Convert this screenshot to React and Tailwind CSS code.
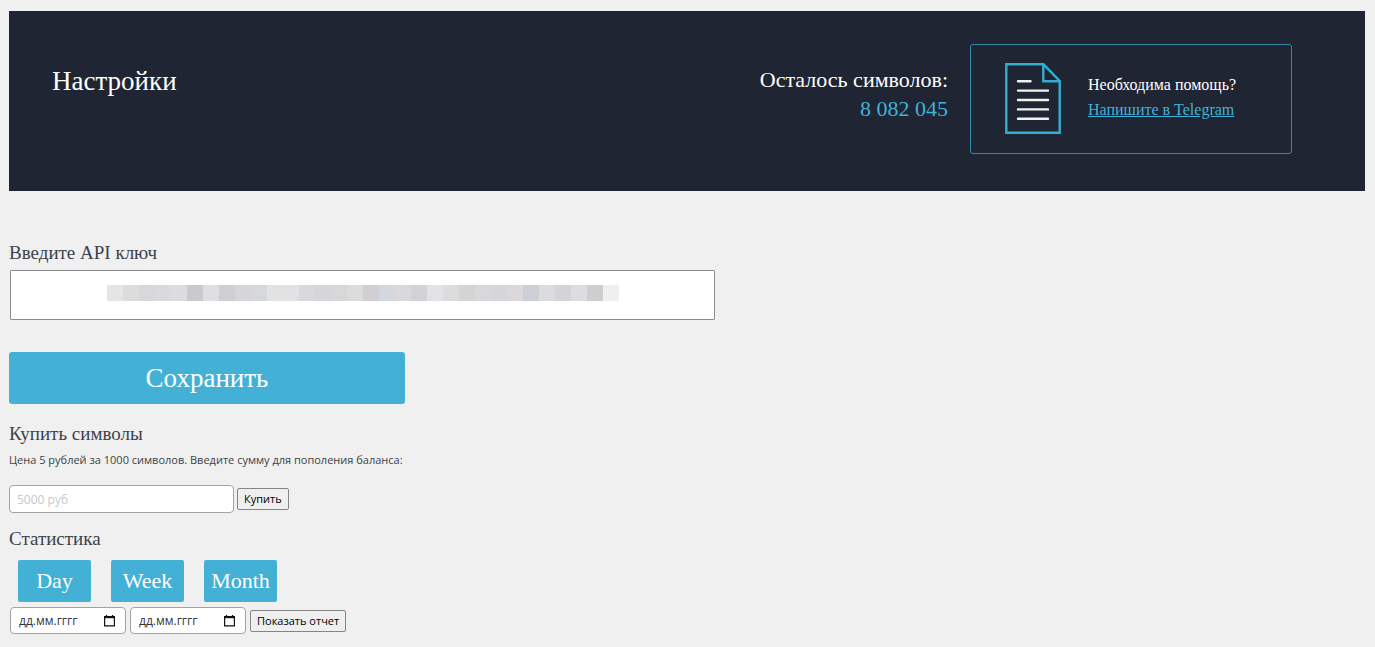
const maskColors = [
  '#e5e5e5', '#dcdcdc', '#d8d8da', '#dadadd', '#dcdcde', '#cacacc', '#dfdfe2', '#d0cdd5',
  '#d6d6d8', '#d5d9dc', '#e2e2e2', '#e2e2e4', '#d7d9de', '#d6d6d9', '#d8d8da', '#dcdcdc',
  '#d0cfd4', '#d3d7e0', '#d9d9db', '#d3d3d7', '#e3e3e5', '#dcdcde', '#d5d3d4', '#d8d8da',
  '#d5d5da', '#dcd8da', '#cecfd6', '#dadcde', '#d3d3d8', '#dcdddf', '#d0cdd1', '#eef0f0',
];

const periods = ['Day', 'Week', 'Month'];

function DocumentIcon() {
  return (
    <svg width="56" height="71" viewBox="0 0 56 71" fill="none" aria-hidden="true" className="shrink-0">
      <path d="M1.300 1.300H38.500L54.700 18V69.700H1.300Z" stroke="#33aed0" strokeWidth="2.4" />
      <path d="M38.300 1.500V18.300H54.500" stroke="#33aed0" strokeWidth="2.4" />
      <path d="M13 18.200H25.500M13 27.600H43M13 37H43M13 46.400H43M13 55.800H43" stroke="#f3f1f0" strokeWidth="2.4" strokeLinecap="round" />
    </svg>
  );
}

function CalendarIcon() {
  return (
    <svg width="11" height="12" viewBox="0 0 11 12" fill="none" aria-hidden="true">
      <path d="M0.600 1.600H10.400V10.900H0.600Z" stroke="#111" strokeWidth="1.200" />
      <path d="M0.600 2.200H10.400" stroke="#111" strokeWidth="2" />
      <path d="M2.500 0V2M8.500 0V2" stroke="#111" strokeWidth="1.200" />
    </svg>
  );
}

function DateField({ label }) {
  return (
    <div className="flex h-[27px] w-[116px] items-center rounded-[4px] border border-[#a3a3a3] bg-white pr-2.5 pl-2">
      <input
        type="text"
        aria-label={label}
        placeholder="дд.мм.гггг"
        className="min-w-0 flex-1 bg-transparent text-xs text-[#32373c] outline-none placeholder:text-[#32373c]"
      />
      <button type="button" aria-label={`${label}: календарь`}>
        <CalendarIcon />
      </button>
    </div>
  );
}

function Heading({ children }) {
  return (
    <h2 className="font-['Liberation_Serif',serif] text-[19px] leading-6 text-[#3c434a]">{children}</h2>
  );
}

function SmallButton({ children }) {
  return (
    <button
      type="button"
      className="h-[22px] rounded-[2px] border border-[#858585] bg-[#efefef] px-1.5 text-[11px] leading-5 text-black"
    >
      {children}
    </button>
  );
}

export default function App() {
  return (
    <div className="min-h-screen bg-[#f0f0f0] px-[9px] pt-[11px] pb-3 font-['Open_Sans','Noto_Sans',sans-serif] text-[#3c434a]">
      <header className="mr-px flex items-start justify-between bg-[#1f2532] pt-[33px] pr-[73px] pb-[37px] pl-[43px] font-['Liberation_Serif',serif] text-white">
        <h1 className="pt-[19px] text-[27px] leading-9">Настройки</h1>
        <div className="flex gap-[22px]">
          <div className="pt-[21px] text-right text-[22px] leading-[29px]">
            <p>Осталось символов:</p>
            <p className="text-[#43b1d8]">8 082 045</p>
          </div>
          <div className="flex h-[110px] w-[322px] items-center gap-[27px] rounded-[3px] border border-[#2f8aa8] pb-px pl-[34px]">
            <DocumentIcon />
            <div className="pb-1 text-base leading-[25px]">
              <p>Необходима помощь?</p>
              <a href="#telegram" className="text-[#43b1d8] underline">Напишите в Telegram</a>
            </div>
          </div>
        </div>
      </header>

      <main>
        <form className="pt-[50px]" onSubmit={(e) => e.preventDefault()}>
          <label htmlFor="api-key" className="block font-['Liberation_Serif',serif] text-[19px] leading-6">
            Введите API ключ
          </label>
          <div className="relative mt-[5px] ml-px w-full max-w-[705px]">
            <input
              id="api-key"
              type="text"
              className="block h-[50px] w-full rounded-[1px] border border-[#8c8c8f] bg-white px-4 text-center text-base"
            />
            <div className="pointer-events-none absolute inset-x-0 top-[15px] flex justify-center" aria-hidden="true">
              {maskColors.map((color, i) => (
                <span key={i} className="size-4" style={{ backgroundColor: color }} />
              ))}
            </div>
          </div>
          <button
            type="submit"
            className="mt-8 block h-[52px] w-full max-w-[396px] rounded-[3px] bg-[#43b1d6] font-['Liberation_Serif',serif] text-[27px] text-white"
          >
            Сохранить
          </button>
        </form>

        <section className="pt-[18px]">
          <Heading>Купить символы</Heading>
          <p className="mt-1 text-[11px] leading-5">
            <label htmlFor="amount">Цена 5 рублей за 1000 символов. Введите сумму для пополения баланса:</label>
          </p>
          <div className="mt-[15px] flex items-center gap-[3px]">
            <input
              id="amount"
              type="text"
              placeholder="5000 руб"
              className="h-7 w-[225px] rounded-[4px] border border-[#a3a3a3] bg-white px-[7px] text-xs placeholder:text-[#c8c8c8]"
            />
            <SmallButton>Купить</SmallButton>
          </div>
        </section>

        <section className="pt-[14px]">
          <Heading>Статистика</Heading>
          <div className="mt-[9px] ml-[9px] flex gap-5">
            {periods.map((period) => (
              <button
                key={period}
                type="button"
                className="h-[42px] w-[73px] rounded-[2px] bg-[#43b1d6] font-['Liberation_Serif',serif] text-[22px] leading-[40px] text-white"
              >
                {period}
              </button>
            ))}
          </div>
          <div className="mt-[5px] flex items-center gap-1 pl-px">
            <DateField label="Начало периода" />
            <DateField label="Конец периода" />
            <SmallButton>Показать отчет</SmallButton>
          </div>
        </section>
      </main>
    </div>
  );
}
